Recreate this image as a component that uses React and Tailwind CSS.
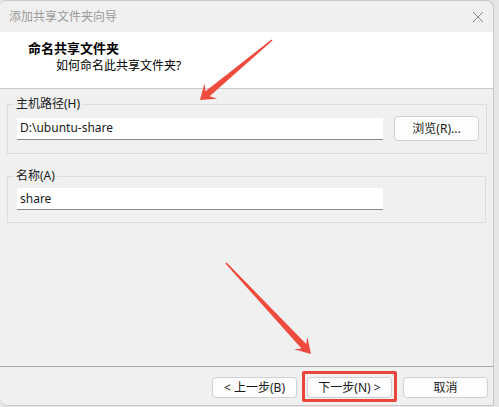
import React from "react";

const font = "font-['Noto_Sans','Noto_Sans_CJK_SC',sans-serif]";

// builds an annotation arrow polygon from tail to tip
const arrowPoints = (tail, tip, headLen, headHalf, shaftHalf, tailHalf) => {
  const dx = tip[0] - tail[0];
  const dy = tip[1] - tail[1];
  const len = Math.hypot(dx, dy);
  const u = [dx / len, dy / len];
  const n = [-u[1], u[0]];
  const at = (d, w) => [tip[0] - u[0] * d + n[0] * w, tip[1] - u[1] * d + n[1] * w];
  const pts = [
    [tail[0] + n[0] * tailHalf, tail[1] + n[1] * tailHalf],
    at(headLen * 0.7, shaftHalf),
    at(headLen, headHalf),
    tip,
    at(headLen, -headHalf),
    at(headLen * 0.7, -shaftHalf),
    [tail[0] - n[0] * tailHalf, tail[1] - n[1] * tailHalf],
  ];
  return pts.map((p) => p.map((v) => v.toFixed(1)).join(",")).join(" ");
};

const WinButton = ({ children, className = "" }) => (
  <button
    className={`bg-[#fdfdfd] border border-[#d0d0d0] rounded-[4px] text-[12px] text-[#1a1a1a] leading-none flex items-center justify-center ${className}`}
  >
    {children}
  </button>
);

const GroupBox = ({ label, value, children, className = "" }) => (
  <fieldset
    className={`mx-[7px] border border-[#dcdcdc] pl-[9px] pr-[7px] pt-[4px] pb-[12px] ${className}`}
  >
    <legend className="ml-[-3px] px-[2px] text-[12px] leading-[16px] text-[#1a1a1a]">
      {label}
    </legend>
    <div className="flex items-center">
      <div className="w-[366px] h-[22px] bg-white border-b border-[#8a8a8a] flex items-center px-[3px] text-[12px] text-[#1a1a1a]">
        {value}
      </div>
      {children}
    </div>
  </fieldset>
);

export default function App() {
  return (
    <div className={`w-[499px] h-[407px] bg-[#e6e6e6] ${font}`}>
      <div className="relative w-[494px] h-[406px] bg-[#f0f0f0] border border-[#c8c8c8] border-l-0 rounded-tr-lg rounded-tl-md rounded-bl-lg overflow-hidden flex flex-col">
        {/* title bar */}
        <div className="h-[31px] flex items-center justify-between pl-[9px] pr-[7px] shrink-0">
          <span className="text-[12px] text-[#9a9a9a] tracking-[0px]">添加共享文件夹向导</span>
          <svg width="14" height="14" viewBox="0 0 14 14" className="mr-[1px]">
            <path d="M2 2 L12 12 M12 2 L2 12" stroke="#8c8c8c" strokeWidth="1" fill="none" />
          </svg>
        </div>

        {/* header */}
        <div className="h-[57px] bg-white border-b border-[#c9c9c9] shrink-0 pt-[8px]">
          <div className="pl-[28px] text-[13px] font-bold leading-[17px] text-black">命名共享文件夹</div>
          <div className="pl-[56px] text-[12px] leading-[17px] text-black">如何命名此共享文件夹?</div>
        </div>

        {/* body */}
        <div className="flex-1 pt-[7px]">
          <GroupBox label="主机路径(H)" value="D:\ubuntu-share">
            <WinButton className="ml-[11px] w-[85px] h-[25px]">浏览(R)...</WinButton>
          </GroupBox>
          <GroupBox label="名称(A)" value="share" className="mt-[14px]" />
        </div>

        {/* footer */}
        <div className="h-[39px] border-t border-[#a8a8a8] shrink-0 flex justify-end items-start pt-[10px] pr-[5px]">
          <WinButton className="w-[85px] h-[21px]">&lt; 上一步(B)</WinButton>
          <div className="relative ml-[10px]">
            <WinButton className="w-[85px] h-[21px]">下一步(N) &gt;</WinButton>
            <div className="absolute -left-[5px] -top-[6px] w-[95px] h-[31px] border-[3px] border-[#e8453c] rounded-[2px] pointer-events-none" />
          </div>
          <WinButton className="ml-[11px] w-[85px] h-[21px]">取消</WinButton>
        </div>

        {/* annotation arrows */}
        <svg className="absolute inset-0 pointer-events-none" width="494" height="406">
          <polygon points={arrowPoints([272, 39], [200, 99], 14, 10, 3.2, 0.8)} fill="#ef4a3e" />
          <polygon points={arrowPoints([226, 262], [311, 353], 15, 9, 3.2, 0.8)} fill="#ef4a3e" />
        </svg>
      </div>
    </div>
  );
}
